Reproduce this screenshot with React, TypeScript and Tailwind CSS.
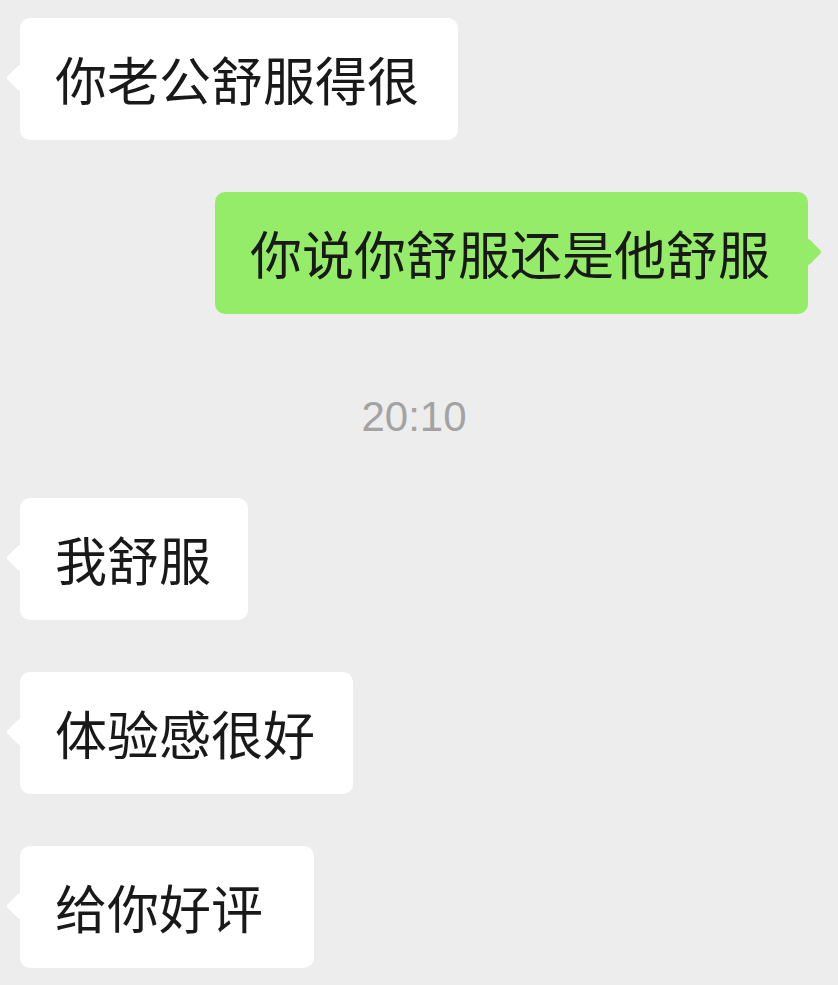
const cjk = "font-['Noto_Sans_CJK_SC','Noto_Sans',sans-serif]";

type Msg = { text: string; mine?: boolean; width: number };

const Bubble = ({ text, mine, width }: Msg) => {
  return (
    <div className={`flex ${mine ? 'justify-end' : 'justify-start'}`}>
      <div
        className={`relative flex h-[122px] items-center rounded-[10px] pl-[35px] ${
          mine ? 'bg-[#95ec69]' : 'bg-white'
        }`}
        style={{ width }}
      >
        <div
          className={`absolute top-[50px] h-[20px] w-[20px] rotate-45 rounded-[3px] ${
            mine ? 'right-[-10px] bg-[#95ec69]' : 'left-[-10px] bg-white'
          }`}
        />
        <span
          className={`relative whitespace-nowrap text-[52px] leading-none text-[#191919] ${cjk}`}
        >
          {text}
        </span>
      </div>
    </div>
  );
};

export default function App() {
  return (
    <div className="h-[985px] w-[838px] overflow-hidden bg-[#ededed] pl-5 pr-[30px] pt-[18px]">
      <div className="flex flex-col gap-[52px]">
        <Bubble text="你老公舒服得很" width={438} />
        <Bubble text="你说你舒服还是他舒服" mine width={593} />
      </div>
      <div className="mb-[61px] mt-[83px] flex h-[40px] items-center justify-center pl-[-10px]">
        <span className="font-['Liberation_Sans',Arial,sans-serif] text-[42px] leading-none text-[#a3a3a3]">
          20:10
        </span>
      </div>
      <div className="flex flex-col gap-[52px]">
        <Bubble text="我舒服" width={228} />
        <Bubble text="体验感很好" width={333} />
        <Bubble text="给你好评" width={294} />
      </div>
    </div>
  );
}
